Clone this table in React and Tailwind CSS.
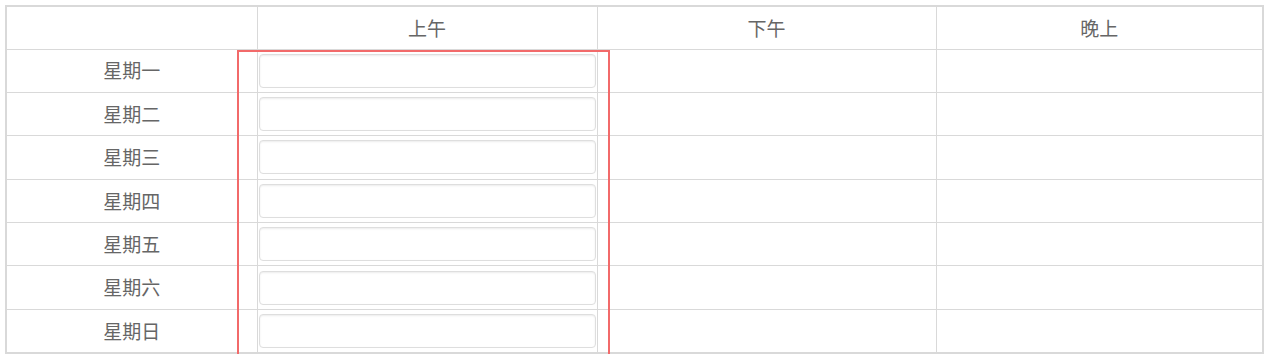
import React from 'react';

const days = ['星期一', '星期二', '星期三', '星期四', '星期五', '星期六', '星期日'];
const slots = ['上午', '下午', '晚上'];

const App = () => {
  return (
    <div className="w-[1269px] h-[354px] bg-white overflow-hidden pl-[5px] pt-[5px] font-['Microsoft_YaHei','Noto_Sans_CJK_SC',sans-serif]">
      <div className="relative w-[1259px]">
        <table className="w-full table-fixed border-collapse border-2 border-[#d9d9d9] text-[#666] text-[19px]">
          <colgroup>
            <col className="w-[251px]" />
            <col className="w-[340px]" />
            <col className="w-[339px]" />
            <col />
          </colgroup>
          <thead>
            <tr className="h-[43px]">
              <th className="border border-[#d9d9d9] font-normal"></th>
              {slots.map((s) => (
                <th key={s} className="border border-[#d9d9d9] font-normal">
                  {s}
                </th>
              ))}
            </tr>
          </thead>
          <tbody>
            {days.map((d) => (
              <tr key={d} className="h-[43.4px]">
                <td className="border border-[#d9d9d9] text-center">{d}</td>
                <td className="border border-[#d9d9d9] px-px py-[3px]">
                  <input
                    type="text"
                    className="block w-full h-[34px] rounded-[4px] border border-[#dedede] bg-white shadow-[inset_0_1px_2px_rgba(0,0,0,0.08)] outline-none"
                  />
                </td>
                <td className="border border-[#d9d9d9]"></td>
                <td className="border border-[#d9d9d9]"></td>
              </tr>
            ))}
          </tbody>
        </table>

        {/* highlight frame over the morning column */}
        <div className="absolute left-[232px] top-[45px] w-[373px] h-[320px] border-2 border-[#f26a6a] pointer-events-none" />
      </div>
    </div>
  );
};

export default App;
